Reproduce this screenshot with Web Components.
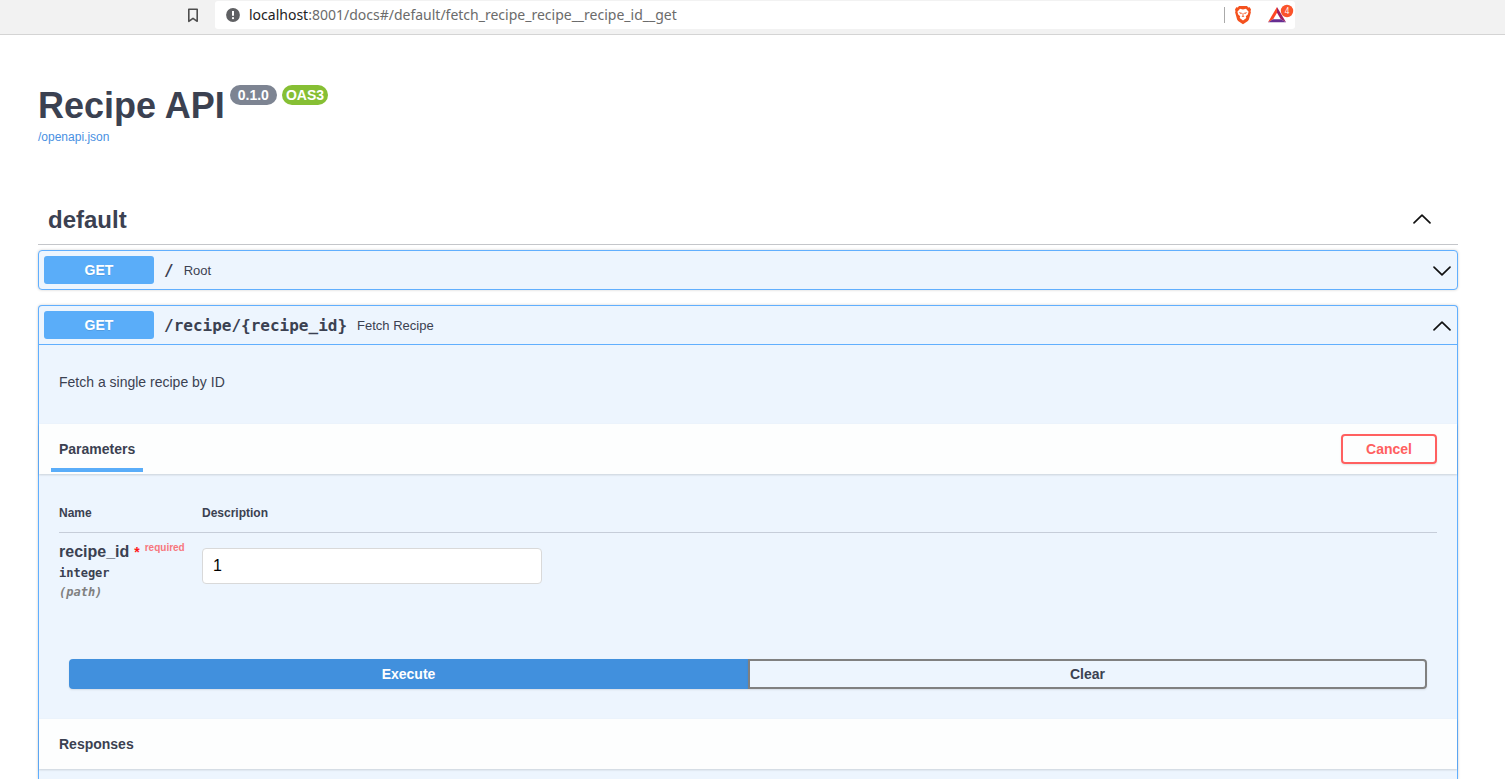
<!DOCTYPE html>
<html lang="en">
<head>
<meta charset="utf-8">
<title>Recipe API</title>
<style>
  body { margin: 0; background: #fff; color: #3b4151; font-family: "Liberation Sans", Arial, sans-serif; }
</style>
</head>
<body>
<docs-app></docs-app>

<template id="t-browser-bar">
  <style>
    :host { display: flex; align-items: center; height: 34px; background: #f2f2f2; border-bottom: 1px solid #d4d4d4; padding: 0 210px 0 186px; }
    button { display: flex; border: 0; background: none; padding: 0; margin: 0; }
    .bookmark { margin: 0 15px 4px 0; }
    .address { flex: 1; display: flex; align-items: center; height: 28px; margin-bottom: 4px; padding: 0 0 0 10px; gap: 8px; background: #fff; border-radius: 3px; }
    .url { flex: 1; font: 14px/20px "Noto Sans", "Open Sans", sans-serif; color: #6b6b6b; }
    .url b { font-weight: 400; color: #222; }
    .divider { width: 1px; height: 16px; background: #aaa; }
  </style>
  <button class="bookmark" aria-label="Bookmark">
    <svg width="14" height="16" viewBox="0 0 14 16" fill="none" stroke="#4e4e4e" stroke-width="1.6" stroke-linejoin="round"><path d="M2.8 2.3h8.4v12L7 11.3l-4.200 3z"/></svg>
  </button>
  <div class="address">
    <svg width="16" height="16" viewBox="0 0 16 16"><circle cx="8" cy="8" r="6.900" fill="#5f6063"/><path d="M8 4v4.800" stroke="#fff" stroke-width="2"/><circle cx="8" cy="11.200" r="1.100" fill="#fff"/></svg>
    <span class="url"><b>localhost</b>:8001/docs#/default/fetch_recipe_recipe__recipe_id__get</span>
    <span class="divider"></span>
    <button aria-label="Shields">
      <svg width="20" height="20" viewBox="0 0 20 20"><path d="M6 1h8l1.200 1.400 1.500-.2 1.300 2.400-.5 1.600.4 1-2 7.300-1 1.500L10 19.300 5.100 16l-1-1.500-2-7.300.4-1L2 4.600l1.300-2.400 1.500.2z" fill="#f4511e"/><path d="M7 3.800l3 .6 3-.6 2.600 3-.8 2.700-2 1.800.5 1.600L10 15.600 6.700 12.900l.5-1.600-2-1.800-.8-2.700z" fill="#fff"/><path d="M5.600 7.200l3 .6.6.8-1.800.2zM14.400 7.200l-3 .6-.6.8 1.800.2zM8.500 11.200L10 10.400l1.500.8L10 12zM9.600 8h.8v3h-.8z" fill="#f4511e"/></svg>
    </button>
    <button aria-label="Rewards, 4 new">
      <svg width="34" height="24" viewBox="0 0 34 24"><path d="M16 4L7 19.200l5.200-3L16 9.800z" fill="#ff4724"/><path d="M16 4l9 15.200-5.200-3L16 9.800z" fill="#9e1f63"/><path d="M7 19.200h18l-5.200-3h-7.600z" fill="#662d91"/><circle cx="26" cy="8" r="6.200" fill="#fb542b"/><text x="26" y="11" font-size="8" fill="#fff" text-anchor="middle" font-family="Noto Sans, sans-serif">4</text></svg>
    </button>
  </div>
</template>

<template id="t-api-title">
  <style>
    :host { display: block; padding: 50px 0; }
    h1 { display: flex; align-items: flex-start; gap: 5px; margin: 0; font-size: 36px; line-height: 41px; }
    .badge { height: 20px; padding: 0 8px; border-radius: 10px; background: #7d8492; color: #fff; font-size: 14px; line-height: 21px; }
    .oas { padding: 0 4px; background: #86bf34; }
    a { display: block; width: max-content; margin-top: 3px; font-size: 12px; line-height: 16px; color: #4990e2; text-decoration: none; }
  </style>
  <h1><slot></slot><span class="badge">0.1.0</span><span class="badge oas">OAS3</span></h1>
  <a href="#openapi">/openapi.json</a>
</template>

<template id="t-chevron">
  <style>
    :host { display: flex; }
    :host([down]) svg { transform: rotate(180deg); }
  </style>
  <svg width="20" height="20" viewBox="0 0 20 20" fill="none" stroke="#111" stroke-width="1.700" stroke-linecap="round" stroke-linejoin="round"><path d="M2 13.900L10 6.100l8 7.800"/></svg>
</template>

<template id="t-tag-header">
  <style>
    :host { display: flex; align-items: center; justify-content: space-between; height: 49px; padding: 0 26px 0 10px; margin-bottom: 5px; border-bottom: 1px solid #c4c6ca; }
    h2 { margin: 0; font-size: 24px; line-height: 28px; }
    button { padding: 0 0 2px; border: 0; background: none; }
  </style>
  <h2><slot></slot></h2>
  <button aria-label="Collapse"><chevron-icon></chevron-icon></button>
</template>

<template id="t-op-block">
  <style>
    :host { display: flex; flex-direction: column; margin-bottom: 15px; border: 1px solid #61affe; border-radius: 4px; background: #edf5fe; box-shadow: 0 0 3px rgba(0,0,0,.19); }
    :host([open]) { flex: 1; margin-bottom: 0; border-bottom: 0; border-radius: 4px 4px 0 0; }
    :host([open]) .summary { border-bottom: 1px solid #61affe; }
    .summary { display: flex; align-items: center; width: 100%; box-sizing: border-box; padding: 5px; border: 0; background: none; color: inherit; text-align: left; }
    .method { width: 110px; margin-right: 10px; border-radius: 3px; background: #5aadf9; color: #fff; font: bold 14px/28px "Liberation Sans", Arial, sans-serif; text-align: center; text-shadow: 0 1px 0 rgba(0,0,0,.1); }
    .path, .title, chevron-icon { padding-top: 2px; }
    .path { margin-right: 10px; font: bold 16px/20px "DejaVu Sans Mono", monospace; }
    .title { flex: 1; font: 13px/20px "Liberation Sans", Arial, sans-serif; }
  </style>
  <button class="summary">
    <span class="method">GET</span>
    <span class="path"></span>
    <span class="title"></span>
    <chevron-icon></chevron-icon>
  </button>
  <slot></slot>
</template>

<template id="t-section-bar">
  <style>
    :host { display: flex; align-items: stretch; justify-content: space-between; height: 50px; padding: 0 20px 0 12px; background: #fdfefe; box-shadow: 0 1px 2px rgba(0,0,0,.15); }
    h3 { display: flex; align-items: center; margin: 0 0 2px; padding: 6px 8px 0; border-bottom: 4px solid transparent; font-size: 14px; line-height: 20px; }
    :host([active]) h3 { border-bottom-color: #5aadf9; }
    .actions { display: flex; align-items: center; }
  </style>
  <h3><slot></slot></h3>
  <div class="actions"><slot name="action"></slot></div>
</template>

<template id="t-action-button">
  <style>
    :host { display: flex; }
    button { flex: 1; height: 30px; min-width: 96px; padding: 0 23px; border: 2px solid #888; border-radius: 4px; background: transparent; color: #3b4151; font: bold 14px/20px "Liberation Sans", Arial, sans-serif; box-shadow: 0 1px 2px rgba(0,0,0,.1); }
    :host([kind="cancel"]) button { border-color: #ff6060; color: #ff6060; }
    :host([kind="execute"]) button { border-color: #4190dd; background: #4190dd; color: #fff; border-radius: 4px 0 0 4px; }
    :host([kind="clear"]) button { border-color: #808080; border-radius: 0 4px 4px 0; }
  </style>
  <button><slot></slot></button>
</template>

<template id="t-param-table">
  <style>
    :host { display: block; padding: 20px 20px 0; }
    table { width: 100%; border-collapse: collapse; table-layout: fixed; }
    th { height: 38px; padding: 0; border-bottom: 1px solid #c6cdd9; font-size: 12px; line-height: 16px; text-align: left; vertical-align: middle; }
    .name-col { width: 143px; }
    td { padding: 9px 0 0; vertical-align: top; }
    .field { padding-top: 15px; }
    label { display: flex; align-items: flex-start; font-size: 16px; font-weight: bold; line-height: 20px; }
    .star { margin: 0 5px; color: #ff1a1a; font-size: 14px; }
    .required { font-size: 10px; line-height: 12px; color: #f7777d; }
    .type, .in { font: bold 12px/19px "DejaVu Sans Mono", monospace; }
    .type { margin-top: 2px; }
    .in { font-style: italic; color: #808080; }
    input { display: block; box-sizing: border-box; width: 340px; max-width: 100%; height: 36px; padding: 0 10px; border: 1px solid #d9d9d9; border-radius: 4px; background: #fff; color: #000; font: 16px/20px "Liberation Sans", Arial, sans-serif; }
  </style>
  <table>
    <thead><tr><th class="name-col">Name</th><th>Description</th></tr></thead>
    <tbody><tr>
      <td>
        <label for="recipe-id">recipe_id<span class="star">*</span><span class="required">required</span></label>
        <div class="type">integer</div>
        <div class="in">(path)</div>
      </td>
      <td class="field"><input id="recipe-id" type="text" value="1"></td>
    </tr></tbody>
  </table>
</template>

<template id="t-docs-app">
  <style>
    :host { display: flex; flex-direction: column; min-height: 100vh; }
    main { flex: 1; display: flex; flex-direction: column; padding: 0 47px 0 38px; }
    p { margin: 0; padding: 27px 20px 32px; font-size: 14px; line-height: 20px; }
    .buttons { display: grid; grid-template-columns: 1fr 1fr; padding: 57px 30px 30px; }
  </style>
  <browser-bar></browser-bar>
  <main>
    <api-title>Recipe API</api-title>
    <tag-header>default</tag-header>
    <op-block path="/" label="Root"></op-block>
    <op-block path="/recipe/{recipe_id}" label="Fetch Recipe" open>
      <p>Fetch a single recipe by ID</p>
      <section-bar active>Parameters<action-button slot="action" kind="cancel">Cancel</action-button></section-bar>
      <param-table></param-table>
      <div class="buttons">
        <action-button kind="execute">Execute</action-button>
        <action-button kind="clear">Clear</action-button>
      </div>
      <section-bar>Responses</section-bar>
    </op-block>
  </main>
</template>

<script>
  class TemplateElement extends HTMLElement {
    constructor() {
      super();
      const template = document.getElementById('t-' + this.constructor.template);
      this.attachShadow({ mode: 'open' }).append(template.content.cloneNode(true));
    }
  }

  class OpBlock extends TemplateElement {
    static template = 'op-block';
    connectedCallback() {
      const root = this.shadowRoot;
      const open = this.hasAttribute('open');
      root.querySelector('.path').textContent = this.getAttribute('path');
      root.querySelector('.title').textContent = this.getAttribute('label');
      root.querySelector('.summary').setAttribute('aria-expanded', open);
      root.querySelector('chevron-icon').toggleAttribute('down', !open);
    }
  }

  customElements.define('chevron-icon', class extends TemplateElement { static template = 'chevron'; });
  customElements.define('op-block', OpBlock);
  for (const name of ['browser-bar', 'api-title', 'tag-header', 'section-bar', 'action-button', 'param-table', 'docs-app']) {
    customElements.define(name, class extends TemplateElement { static template = name; });
  }
</script>
</body>
</html>
